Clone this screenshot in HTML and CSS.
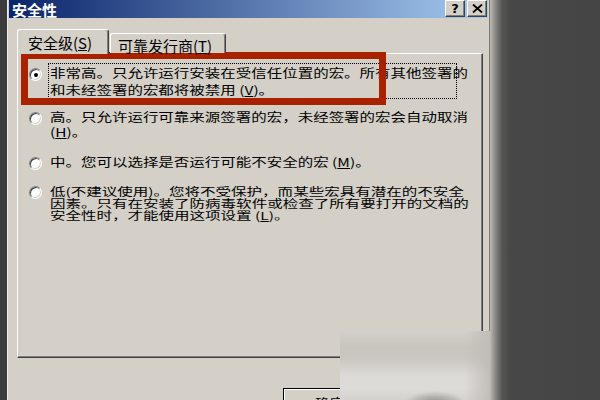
FILE: index.html
```html
<!DOCTYPE html>
<html>
<head>
<meta charset="utf-8">
<link rel="stylesheet" href="styles.css">
</head>
<body>
<div class="screen">
  <div class="dialog">
    <div class="titlebar">
      <span class="title">安全性</span>
      <div class="tbtns">
        <span class="tbtn help">?</span>
        <span class="tbtn close"><svg width="11" height="9" viewBox="0 0 11 9"><path d="M1 0.5 L10 8.5 M10 0.5 L1 8.5" stroke="#000" stroke-width="1.8" fill="none"/></svg></span>
      </div>
    </div>
    <div class="dlgbody">
      <div class="tabs">
        <div class="tab active">安全级(<u>S</u>)</div>
        <div class="tab second">可靠发行商(<u>T</u>)</div>
      </div>
      <div class="panel">
        <div class="option o1">
          <span class="radio checked"></span>
          <div class="label focus"><span class="txt">非常高。只允许运行安装在受信任位置的宏。所有其他签署的<br>和未经签署的宏都将被禁用 (<u>V</u>)。</span></div>
        </div>
        <div class="option o2">
          <span class="radio"></span>
          <div class="label"><span class="txt">高。只允许运行可靠来源签署的宏，未经签署的宏会自动取消<br>(<u>H</u>)。</span></div>
        </div>
        <div class="option o3">
          <span class="radio"></span>
          <div class="label"><span class="txt">中。您可以选择是否运行可能不安全的宏 (<u>M</u>)。</span></div>
        </div>
        <div class="option o4">
          <span class="radio"></span>
          <div class="label"><span class="txt">低(不建议使用)。您将不受保护，而某些宏具有潜在的不安全<br>因素。只有在安装了防病毒软件或检查了所有要打开的文档的<br>安全性时，才能使用这项设置 (<u>L</u>)。</span></div>
        </div>
        <div class="redbox"></div>
      </div>
      <div class="buttons">
        <div class="btn default"><span class="btxt">确定</span></div>
        <div class="btn"><span class="btxt">取消</span></div>
      </div>
    </div>
  </div>
  <div class="watermark"></div>
</div>
</body>
</html>
```
FILE: styles.css
```css
* { box-sizing: border-box; margin: 0; padding: 0; }
html, body { width: 600px; height: 400px; overflow: hidden; }
body {
  background: #454545;
  font-family: "Noto Sans CJK SC", "Noto Sans", sans-serif;
  color: #000;
}
.screen {
  position: relative;
  width: 600px;
  height: 400px;
  overflow: hidden;
  display: flex;
  align-items: flex-start;
  background: linear-gradient(to right, #3c3c3c 0, #3c3c3c 489px, #bdb9b3 490px, #8d8b88 495px, #565656 502px, #474747 510px, #454545 100%);
}
.dialog {
  flex: none;
  margin-left: 7px;
  width: 482px;
  border-left: 1px solid #ececec;
  padding: 0 1px;
  background: #d4d0c8;
  display: flex;
  flex-direction: column;
}
.dialog > *, .dlgbody > *, .panel > .option { flex-shrink: 0; }
.titlebar {
  height: 18px;
  display: flex;
  justify-content: space-between;
  align-items: flex-start;
  padding: 0 1px 0 3px;
  background: linear-gradient(to right, #0a246a, #a6caf0);
}
.title {
  color: #fff;
  font-weight: bold;
  font-size: 15px;
  line-height: 19px;
}
.tbtns { display: flex; gap: 2px; }
.tbtn {
  width: 20px;
  height: 17px;
  background: #d4d0c8;
  border: 1px solid;
  border-color: #fff #404040 #404040 #fff;
  box-shadow: inset -1px -1px #808080;
  display: flex;
  align-items: center;
  justify-content: center;
}
.help {
  font-family: "DejaVu Sans", sans-serif;
  font-weight: bold;
  font-size: 13px;
  line-height: 1;
}
.dlgbody {
  padding: 11px 5px 0 8px;
  display: flex;
  flex-direction: column;
}
.tabs {
  display: flex;
  align-items: flex-end;
  height: 24px;
  position: relative;
  z-index: 1;
}
.tab {
  background: #d4d0c8;
  border: 1px solid;
  border-color: #fff #404040 transparent #fff;
  border-bottom: none;
  border-radius: 3px 3px 0 0;
  box-shadow: inset -1px 0 #808080;
  font-size: 15px;
  line-height: 19px;
  white-space: nowrap;
}
.tab.active { width: 92px; height: 25px; margin-bottom: -1px; padding: 3px 0 0 10px; }
.tab.second { width: 116px; height: 20px; margin-left: 1px; padding: 2px 0 0 7px; }
.panel {
  position: relative;
  width: 466px;
  height: 305px;
  border: 1px solid;
  border-color: #fff #404040 #404040 #fff;
  box-shadow: inset -1px -1px #808080;
  padding: 9px 0 0 11px;
  display: flex;
  flex-direction: column;
}
.option { display: flex; align-items: flex-start; }
.radio {
  flex: none;
  width: 13px;
  height: 13px;
  border-radius: 50%;
  background: #fff;
  border: 1px solid;
  border-color: #808080 #fff #fff #808080;
  box-shadow: inset 1px 1px #404040, inset -1px -1px #d4d0c8;
  position: relative;
}
.radio.checked::after {
  content: "";
  position: absolute;
  left: 50%;
  top: 50%;
  width: 4px;
  height: 4px;
  margin: -2px 0 0 -2px;
  border-radius: 50%;
  background: #000;
}
.label { margin-left: 6px; padding-left: 2px; }
.label.focus {
  width: 409px;
  height: 36px;
  border: 1px dotted #000;
  padding-left: 1px;
}
.txt {
  display: block;
  font-size: 12px;
  white-space: nowrap;
  transform: scaleX(1.29);
  transform-origin: 0 0;
}
.o1 .txt { line-height: 17px; }
.o1 .radio { margin-top: 5px; }
.o2 { margin-top: 10px; }
.o2 .txt, .o3 .txt { line-height: 15px; }
.o2 .radio, .o3 .radio { margin-top: 3px; }
.o3 { margin-top: 15px; }
.o4 { margin-top: 15px; }
.o4 .txt { font-size: 11px; line-height: 12px; transform: scaleX(1.41); }
.o4 .radio { margin-top: 1px; }
.redbox {
  position: absolute;
  left: 3px;
  top: -2px;
  width: 365px;
  height: 53px;
  border: 7px solid #a82200;
}
.buttons {
  margin-top: 30px;
  display: flex;
  gap: 8px;
  padding-left: 266px;
}
.btn {
  width: 94px;
  height: 28px;
  border: 1px solid #000;
  box-shadow: inset 1px 1px #fff, inset -1px -1px #404040, inset -2px -2px #808080;
  display: flex;
  justify-content: center;
  padding-top: 6px;
}
.btxt {
  font-size: 12px;
  line-height: 15px;
  display: inline-block;
  transform: scaleX(1.25);
}
.watermark {
  position: absolute;
  left: 340px;
  top: 331px;
  width: 150px;
  height: 69px;
  background:
    radial-gradient(ellipse 32px 14px at 95px 74px, rgba(120,118,115,0.85), rgba(120,118,115,0) 100%),
    linear-gradient(to right, rgba(190,187,182,0) 0, rgba(190,187,182,0) 125px, rgba(190,187,182,0.9) 150px),
    linear-gradient(to bottom, #d3d0cb 0, #c8c5bf 16px, #cac7c2 28px, #dcdad6 44px, #dddbd8 58px, #d4d2ce 69px);
}
```
